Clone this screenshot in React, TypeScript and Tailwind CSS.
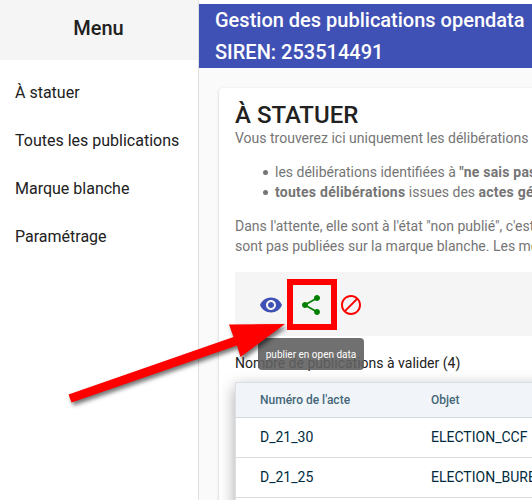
import React from "react";

const menuItems = ["À statuer", "Toutes les publications", "Marque blanche", "Paramétrage"];

const rows = [
  { id: "D_21_30", subject: "ELECTION_CCF" },
  { id: "D_21_25", subject: "ELECTION_BUREAU" },
  { id: "", subject: "" },
];

const icons = [
  {
    label: "Visualiser",
    color: "text-[#3f51b5]",
    path: "M12 4.5C7 4.5 2.73 7.61 1 12c1.73 4.39 6 7.5 11 7.5s9.27-3.11 11-7.5c-1.73-4.39-6-7.5-11-7.5zM12 17c-2.76 0-5-2.24-5-5s2.24-5 5-5 5 2.24 5 5-2.24 5-5 5zm0-8c-1.66 0-3 1.34-3 3s1.34 3 3 3 3-1.34 3-3-1.34-3-3-3z",
  },
  {
    label: "Publier",
    color: "text-[#008000]",
    path: "M18 16.08c-.76 0-1.44.3-1.96.77L8.91 12.7c.05-.23.09-.46.09-.7s-.04-.47-.09-.7l7.05-4.11c.54.5 1.25.81 2.04.81 1.66 0 3-1.34 3-3s-1.34-3-3-3-3 1.34-3 3c0 .24.04.47.09.7L8.04 9.81C7.5 9.31 6.79 9 6 9c-1.66 0-3 1.34-3 3s1.34 3 3 3c.79 0 1.5-.31 2.04-.81l7.12 4.16c-.05.21-.08.43-.08.65 0 1.61 1.31 2.92 2.92 2.92s2.92-1.31 2.92-2.92-1.31-2.92-2.92-2.92z",
  },
  {
    label: "Refuser",
    color: "text-[#ff0000]",
    path: "M12 2C6.48 2 2 6.48 2 12s4.48 10 10 10 10-4.48 10-10S17.52 2 12 2zM4 12c0-4.42 3.58-8 8-8 1.85 0 3.55.63 4.9 1.69L5.69 16.9C4.63 15.55 4 13.85 4 12zm8 8c-1.85 0-3.55-.63-4.9-1.69L18.31 7.1C19.37 8.45 20 10.15 20 12c0 4.42-3.58 8-8 8z",
  },
];

function Sidebar() {
  return (
    <aside className="h-full w-[199px] shrink-0 border-r border-[#e0e0e0] bg-white">
      <h2 className="flex h-[60px] items-center justify-center bg-[#f5f5f5] pr-px pb-1 text-xl font-medium">Menu</h2>
      <nav className="flex flex-col pt-[9px]">
        {menuItems.map((item) => (
          <a key={item} className="flex h-12 items-center whitespace-nowrap pl-[15px] text-base">
            {item}
          </a>
        ))}
      </nav>
    </aside>
  );
}

function Toolbar() {
  return (
    <div className="relative mt-4 flex h-16 items-center bg-[#f5f5f5] px-4">
      {icons.map((icon) => (
        <button key={icon.label} aria-label={icon.label} className={`flex size-10 items-center justify-center ${icon.color}`}>
          <svg viewBox="0 0 24 24" className="mt-[2px] size-6" fill="currentColor">
            <path d={icon.path} />
          </svg>
        </button>
      ))}
      <div className="absolute left-[52px] top-[7px] h-[51px] w-[50px] border-6 border-[#ff0000]" />
      <div className="absolute left-[23px] top-[66px] z-10 flex h-8 w-[106px] items-center justify-center whitespace-nowrap rounded bg-[#616161]/90 pt-px text-[10px] text-white">
        publier en open data
      </div>
    </div>
  );
}

function ActTable() {
  return (
    <div className="mt-[9px] w-[700px] border border-[#d9dfe3] bg-white text-sm text-[#002b3d] shadow-[0_5px_15px_rgba(0,0,0,0.35)]">
      <div className="grid h-[35px] grid-cols-[171px_1fr] items-center border-b border-[#d3dade] bg-[#f1f5f9] pl-6 text-xs font-medium text-[#466779]">
        <span>Numéro de l'acte</span>
        <span>Objet</span>
      </div>
      {rows.map((row, i) => (
        <div key={i} className="grid h-10 grid-cols-[171px_1fr] items-center border-b border-[#dcdcdc] pb-px pl-6">
          <span>{row.id}</span>
          <span>{row.subject}</span>
        </div>
      ))}
    </div>
  );
}

export default function App() {
  return (
    <div className="relative flex h-[500px] w-[532px] overflow-hidden bg-white font-['Roboto',sans-serif] text-[#212121]">
      <Sidebar />
      <main className="min-w-0 flex-1 overflow-hidden pt-1">
        <header className="h-16 whitespace-nowrap bg-[#3f51b5] pl-4 text-xl leading-8 font-medium text-white">
          <div>Gestion des publications opendata</div>
          <div>SIREN: 253514491</div>
        </header>
        <div className="h-[432px] bg-[#fafafa] pl-5 pt-5">
          <section className="h-[600px] w-[740px] rounded bg-white px-4 pt-[11px] shadow-[0_1px_3px_rgba(0,0,0,0.2)]">
            <h1 className="text-2xl leading-8 font-medium">À STATUER</h1>
            <div className="whitespace-nowrap text-sm leading-5 text-[#757575]">
              <p className="-mt-[3px]">Vous trouverez ici uniquement les délibérations :</p>
              <ul className="mt-[14px] pl-10">
                <li className="relative before:absolute before:top-[8px] before:-left-[12px] before:size-[5px] before:rounded-full before:bg-[#757575]">
                  les délibérations identifiées à <b className="tracking-[0.2px]">"ne sais pas"</b>
                </li>
                <li className="relative before:absolute before:top-[8px] before:-left-[12px] before:size-[5px] before:rounded-full before:bg-[#757575]">
                  <b className="tracking-[0.25px]">toutes délibérations</b> issues des <b className="tracking-[0.25px]">actes générés</b>
                </li>
              </ul>
              <p className="mt-[14px]">
                Dans l'attente, elle sont à l'état "non publié", c'est-à-dire
                <br />
                sont pas publiées sur la marque blanche. Les modifications
              </p>
            </div>
            <Toolbar />
            <p className="mt-[17px] text-sm leading-5">Nombre de publications à valider (4)</p>
            <ActTable />
          </section>
        </div>
      </main>
      <svg
        className="pointer-events-none absolute left-0 top-0 z-20 h-[500px] w-[532px] drop-shadow-[2px_3px_2px_rgba(0,0,0,0.55)]"
        viewBox="0 0 532 500"
      >
        <path fill="#ff0000" d="M68.5 394.5L233.5 337L229 324.5L285 324L240.5 357L237 345.5L71.5 402.5Z" />
      </svg>
    </div>
  );
}
